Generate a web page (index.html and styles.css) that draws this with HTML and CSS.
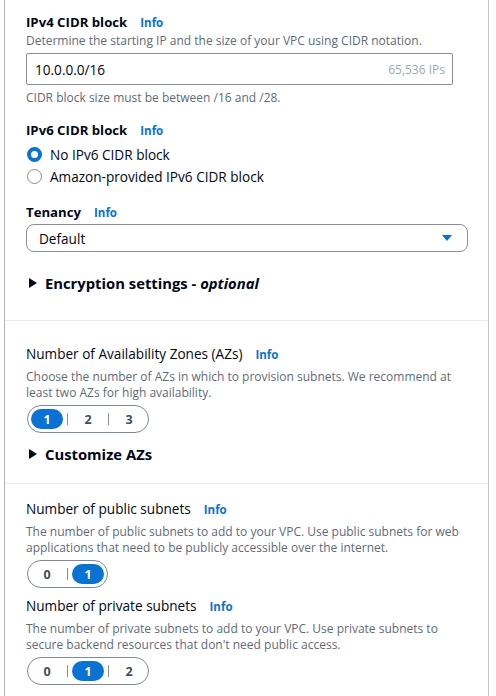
FILE: index.html
```html
<!DOCTYPE html>
<html>
<head>
<meta charset="utf-8">
<link rel="stylesheet" href="styles.css">
</head>
<body>
<div class="panel">
  <section class="sec sec-1">
    <div class="field">
      <div class="label"><span class="label-text strong">IPv4 CIDR block</span><a class="info">Info</a></div>
      <div class="desc">Determine the starting IP and the size of your VPC using CIDR notation.</div>
      <div class="input">
        <span class="input-value">10.0.0.0/16</span>
        <span class="input-hint">65,536 IPs</span>
      </div>
      <div class="desc constraint">CIDR block size must be between /16 and /28.</div>
    </div>

    <div class="field field-ipv6">
      <div class="label"><span class="label-text strong">IPv6 CIDR block</span><a class="info">Info</a></div>
      <div class="radios">
        <div class="radio-row"><span class="radio checked"></span><span class="radio-label">No IPv6 CIDR block</span></div>
        <div class="radio-row"><span class="radio"></span><span class="radio-label">Amazon-provided IPv6 CIDR block</span></div>
      </div>
    </div>

    <div class="field field-tenancy">
      <div class="label"><span class="label-text strong">Tenancy</span><a class="info">Info</a></div>
      <div class="select">
        <span class="select-value">Default</span>
        <svg class="caret" width="12" height="8" viewBox="0 0 12 8"><path d="M1 1h10L6 7z" fill="#0972d3"/></svg>
      </div>
    </div>

    <div class="expander">
      <svg class="tri" width="10" height="12" viewBox="0 0 10 12"><path d="M1 1l8 5-8 5z" fill="#000716"/></svg>
      <span>Encryption settings - <em>optional</em></span>
    </div>
  </section>

  <section class="sec sec-2">
    <div class="label"><span class="label-text">Number of Availability Zones (AZs)</span><a class="info">Info</a></div>
    <div class="desc">Choose the number of AZs in which to provision subnets. We recommend at least two AZs for high availability.</div>
    <div class="seg">
      <span class="seg-item on">1</span><span class="seg-sep"></span><span class="seg-item">2</span><span class="seg-sep"></span><span class="seg-item">3</span>
    </div>
    <div class="expander expander-az">
      <svg class="tri" width="10" height="12" viewBox="0 0 10 12"><path d="M1 1l8 5-8 5z" fill="#000716"/></svg>
      <span>Customize AZs</span>
    </div>
  </section>

  <section class="sec sec-3">
    <div class="label"><span class="label-text">Number of public subnets</span><a class="info">Info</a></div>
    <div class="desc">The number of public subnets to add to your VPC. Use public subnets for web applications that need to be publicly accessible over the internet.</div>
    <div class="seg">
      <span class="seg-item">0</span><span class="seg-sep"></span><span class="seg-item on">1</span>
    </div>

    <div class="label label-private"><span class="label-text">Number of private subnets</span><a class="info">Info</a></div>
    <div class="desc">The number of private subnets to add to your VPC. Use private subnets to secure backend resources that don't need public access.</div>
    <div class="seg">
      <span class="seg-item">0</span><span class="seg-sep"></span><span class="seg-item on">1</span><span class="seg-sep"></span><span class="seg-item">2</span>
    </div>
  </section>
</div>
</body>
</html>
```

FILE: styles.css
```css
* { box-sizing: border-box; }
html, body { margin: 0; padding: 0; background: #ffffff; }
body {
  font-family: "Open Sans", "Noto Sans", sans-serif;
  color: #000716;
  font-size: 13.6px;
}
.panel {
  margin-left: 4px;
  width: 485px;
  min-height: 696px;
  border-left: 1px solid #b4b4bf;
  border-right: 1px solid #c6c6cd;
}
.sec { padding-left: 21px; padding-right: 22px; }
.sec-1 { padding-top: 13px; padding-bottom: 27px; border-bottom: 1px solid #e9ebed; }
.sec-2 { padding-top: 24px; padding-bottom: 19px; border-bottom: 1px solid #e9ebed; }
.sec-3 { padding-top: 16px; }

.label { display: flex; align-items: baseline; line-height: 18px; }
.label-text { font-size: 13.6px; }
.label-text.strong { font-weight: 700; font-size: 13.2px; }
.info {
  margin-left: 13px;
  font-size: 11.5px;
  font-weight: 700;
  color: #0972d3;
}
.desc {
  margin-top: 5px;
  font-size: 12px;
  line-height: 16px;
  color: #5f6b7a;
}
.field .desc { margin-top: 1px; }

.input {
  margin-top: 4px;
  width: 427px;
  height: 32px;
  border: 1px solid #8c8c94;
  border-radius: 2px;
  display: flex;
  align-items: center;
  justify-content: space-between;
  padding: 0 7px 0 8px;
}
.input-value { font-size: 13.6px; color: #000716; }
.input-hint { font-size: 12px; color: #9ba7b6; }
.field .constraint { margin-top: 5px; }

.field-ipv6 { margin-top: 15px; }
.radios { margin-top: 3px; }
.radio-row { display: flex; align-items: center; height: 22px; }
.radio {
  width: 15px; height: 15px;
  border-radius: 50%;
  border: 1px solid #8c8c94;
  margin-left: 1px;
  margin-right: 8px;
  flex: none;
}
.radio.checked { border: 4.5px solid #0972d3; }
.radio-label { font-size: 13.6px; }

.field-tenancy { margin-top: 16px; }
.select {
  margin-top: 2px;
  width: 442px;
  height: 28px;
  border: 1px solid #8c8c94;
  border-radius: 8px;
  display: flex;
  align-items: center;
  justify-content: space-between;
  padding: 0 14px 0 12px;
}
.select-value { font-size: 13.6px; }

.expander {
  margin-top: 21px;
  display: flex;
  align-items: center;
  height: 20px;
  font-size: 14.8px;
  font-weight: 700;
}
.expander .tri { margin-left: 2px; margin-right: 7px; }
.expander em { font-style: italic; }
.expander-az { margin-top: 11px; }

.seg {
  margin-top: 4px;
  margin-left: 1px;
  display: flex;
  width: max-content;
  align-items: center;
  height: 28px;
  padding: 0 3px;
  border: 1px solid #7d8998;
  border-radius: 14px;
}
.seg-item {
  width: 32px;
  height: 20px;
  border-radius: 10px;
  display: flex;
  align-items: center;
  justify-content: center;
  font-size: 12.5px;
  font-weight: 700;
  color: #414d5c;
}
.seg-item.on { background: #0972d3; color: #ffffff; }
.seg-sep { width: 1px; height: 12px; background: #8c8c94; margin: 0 4px; }
.label-private { margin-top: 9px; }
```
